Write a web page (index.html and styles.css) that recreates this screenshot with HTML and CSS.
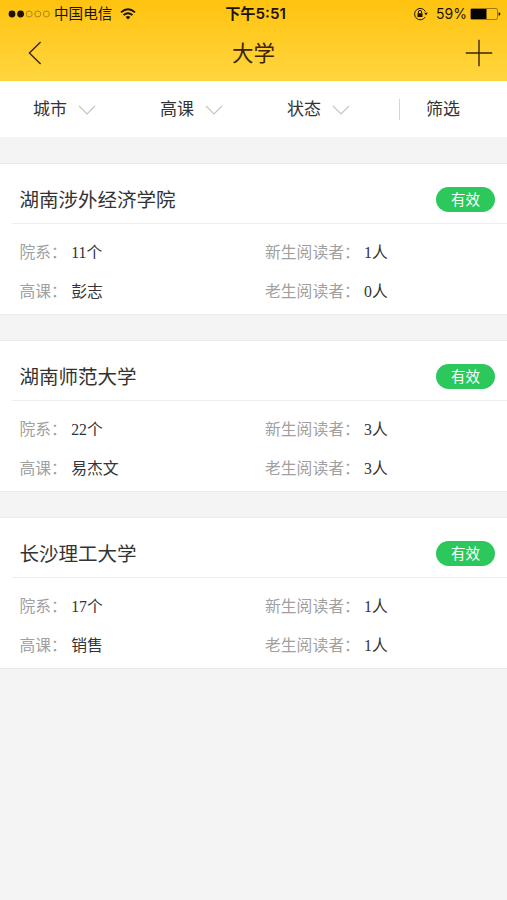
FILE: index.html
```html
<!DOCTYPE html>
<html lang="zh-CN">
<head>
<meta charset="utf-8">
<title>大学</title>
<link rel="stylesheet" href="styles.css">
</head>
<body>
<header class="header">
  <div class="status">
    <div class="status-left">
      <svg class="signal" width="42" height="10" viewBox="0 0 42 10"><g fill="#1c1300"><circle cx="4" cy="5" r="3.4"/><circle cx="12.6" cy="5" r="3.4"/></g><g fill="none" stroke="#9a7610" stroke-width=".8"><circle cx="21.2" cy="5" r="3"/><circle cx="29.8" cy="5" r="3"/><circle cx="38.4" cy="5" r="3"/></g></svg>
      <span class="carrier">中国电信</span>
      <svg class="wifi" width="16" height="12" viewBox="0 0 16 12"><g fill="none" stroke="#1c1300" stroke-width="1.9"><path d="M1 4.4Q8-1.8 15 4.4"/><path d="M3.5 7.1Q8 3.2 12.5 7.1"/></g><path d="M5.6 8.9Q8 7 10.4 8.9L8 11.6Z" fill="#1c1300"/></svg>
    </div>
    <div class="clock">下午5:51</div>
    <div class="status-right">
      <svg width="15" height="14" viewBox="0 0 15 14"><g fill="none" stroke="#1c1300"><path d="M12.4 4.6A5.7 5.7 0 1 0 12.2 10" stroke-width="1"/><path d="M5.4 6.5V5a1.6 1.6 0 0 1 3.2 0v1.5" stroke-width="1"/></g><path d="M4.5 6.2h5v3.7h-5zM11.2 5.8h3.6l-1.8 2.7z" fill="#1c1300"/></svg>
      <span class="percent">59%</span>
      <svg width="31" height="12" viewBox="0 0 31 12"><rect x=".5" y=".5" width="27" height="11" rx="1.6" fill="none" stroke="#94700c" stroke-width=".9"/><path d="M1 1h15.5v10H1z" fill="#050300"/><path d="M28.6 4.2q1.8.2 1.8 1.8t-1.8 1.8z" fill="#1c1300"/></svg>
    </div>
  </div>
  <div class="nav">
    <svg class="back" width="14" height="24" viewBox="0 0 14 24"><path d="M12.6 1L1.4 12l11.2 11" fill="none" stroke="#3c2504" stroke-width="1.4"/></svg>
    <h1 class="nav-title">大学</h1>
    <svg class="add" width="28" height="28" viewBox="0 0 28 28"><path d="M14 .8v26.4M.8 14h26.4" fill="none" stroke="#3c2504" stroke-width="1.4"/></svg>
  </div>
</header>
<nav class="filters">
  <div class="filter">城市<svg class="chevron" width="18" height="11" viewBox="0 0 18 11"><path d="M1 1l8 8 8-8"/></svg></div>
  <div class="filter">高课<svg class="chevron" width="18" height="11" viewBox="0 0 18 11"><path d="M1 1l8 8 8-8"/></svg></div>
  <div class="filter">状态<svg class="chevron" width="18" height="11" viewBox="0 0 18 11"><path d="M1 1l8 8 8-8"/></svg></div>
  <div class="filter-more">筛选</div>
</nav>
<main class="list">
  <section class="card">
    <div class="card-head"><h2 class="name">湖南涉外经济学院</h2><span class="badge">有效</span></div>
    <div class="details">
      <div><span class="label">院系：</span><span class="value">11个</span></div>
      <div><span class="label">新生阅读者：</span><span class="value">1人</span></div>
      <div><span class="label">高课：</span><span class="value">彭志</span></div>
      <div><span class="label">老生阅读者：</span><span class="value">0人</span></div>
    </div>
  </section>
  <section class="card">
    <div class="card-head"><h2 class="name">湖南师范大学</h2><span class="badge">有效</span></div>
    <div class="details">
      <div><span class="label">院系：</span><span class="value">22个</span></div>
      <div><span class="label">新生阅读者：</span><span class="value">3人</span></div>
      <div><span class="label">高课：</span><span class="value">易杰文</span></div>
      <div><span class="label">老生阅读者：</span><span class="value">3人</span></div>
    </div>
  </section>
  <section class="card">
    <div class="card-head"><h2 class="name">长沙理工大学</h2><span class="badge">有效</span></div>
    <div class="details">
      <div><span class="label">院系：</span><span class="value">17个</span></div>
      <div><span class="label">新生阅读者：</span><span class="value">1人</span></div>
      <div><span class="label">高课：</span><span class="value">销售</span></div>
      <div><span class="label">老生阅读者：</span><span class="value">1人</span></div>
    </div>
  </section>
</main>
</body>
</html>
```
FILE: styles.css
```css
* { box-sizing: border-box; }
body {
  margin: 0;
  min-height: 900px;
  background: #f4f4f4;
  color: #333;
  font-family: "Liberation Sans", "Noto Sans CJK SC", sans-serif;
}
svg { display: block; flex: none; }
h1, h2 { margin: 0; font-weight: 400; }
.header {
  height: 81px;
  background: linear-gradient(#ffc30f, #ffd640);
}
.status {
  display: grid;
  grid-template-columns: 1fr auto 1fr;
  align-items: center;
  height: 27px;
  padding: 0 6px 0 8px;
  color: #1c1300;
  line-height: 27px;
}
.status-left, .status-right { display: flex; align-items: center; }
.status-right { justify-content: flex-end; }
.carrier { margin: 0 8px 0 4px; padding-top: 1px; font-size: 14.6px; line-height: 26px; }
.clock {
  margin-left: 2px;
  font-family: Inter, "Noto Sans CJK SC", sans-serif;
  font-size: 15.2px;
  font-weight: 600;
}
.percent {
  margin: 0 3px 0 8px;
  font-family: Inter, sans-serif;
  font-size: 14px;
}
.nav {
  display: grid;
  grid-template-columns: 1fr auto 1fr;
  align-items: center;
  height: 52px;
  padding: 0 14px 0 28px;
}
.nav-title {
  margin-right: 14px;
  padding-top: 2px;
  color: #3c2504;
  font-size: 21.5px;
  line-height: 50px;
}
.add { justify-self: end; }
.filters {
  display: flex;
  align-items: center;
  height: 56px;
  padding-left: 33px;
  background: #fff;
  font-size: 17px;
}
.filter {
  display: flex;
  align-items: center;
  width: 127px;
  height: 56px;
  padding-top: 2px;
  line-height: 54px;
}
.filter:nth-child(3) { width: 112px; }
.chevron {
  margin: 1px 0 0 10.5px;
  fill: none;
  stroke: #c5c5c5;
  stroke-width: 1.2;
}
.filter-more {
  padding-left: 26px;
  border-left: 1px solid #d5d5d5;
  line-height: 21px;
}
.list {
  display: flex;
  flex-direction: column;
  gap: 25px;
  padding-top: 26px;
}
.card {
  height: 152px;
  border: solid #ebebeb;
  border-width: 1px 0;
  background: #fff;
}
.card-head {
  display: flex;
  align-items: center;
  justify-content: space-between;
  height: 60px;
  margin-left: 12px;
  padding: 12px 12px 0 7.5px;
  border-bottom: 1px solid #eee;
}
.name { padding-top: 2px; font-size: 19.5px; line-height: 45px; }
.badge {
  width: 59px;
  height: 25px;
  padding-top: 1px;
  border-radius: 13px;
  background: #2dc85c;
  color: #fff;
  font-size: 14.5px;
  line-height: 24px;
  text-align: center;
}
.details {
  display: grid;
  grid-template-columns: 245px 1fr;
  padding: 9px 0 0 19.5px;
  font-family: "Liberation Serif", "Noto Sans CJK SC", serif;
  font-size: 15.8px;
  line-height: 39px;
}
.details > div { height: 39px; }
.details > div:nth-child(even) { padding-left: .5px; }
.label { margin-right: 4.3px; color: #a0a0a0; }
```
